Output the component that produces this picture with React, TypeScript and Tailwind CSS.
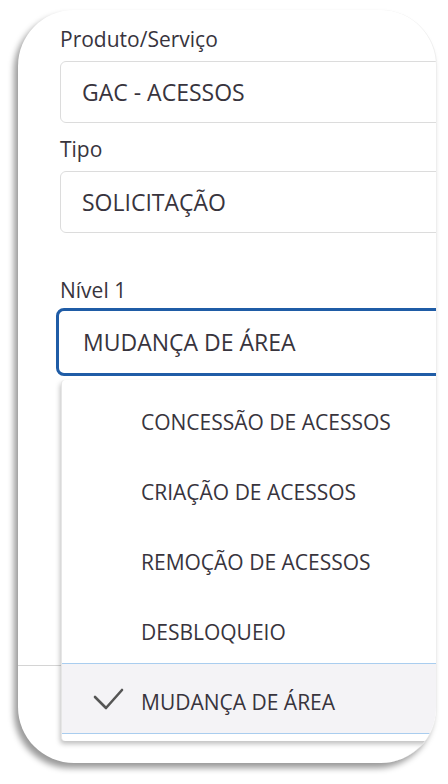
const options = [
  "CONCESSÃO DE ACESSOS",
  "CRIAÇÃO DE ACESSOS",
  "REMOÇÃO DE ACESSOS",
  "DESBLOQUEIO",
  "MUDANÇA DE ÁREA",
];

function Field({ label, value, className = "" }: { label: string; value: string; className?: string }) {
  return (
    <div className={className}>
      <label className="block text-[21px] leading-[28px] text-[#38343d]">{label}</label>
      <div className="mt-[8px] flex h-[62px] w-[420px] items-center rounded-[6px] border border-[#dcdcdc] pl-[21px] text-[23px] text-[#38343d]">
        {value}
      </div>
    </div>
  );
}

export default function App() {
  const selected = "MUDANÇA DE ÁREA";

  return (
    <div className="min-h-[784px] bg-white pt-[10px] pl-[18px] font-['Open_Sans',sans-serif]">
      <div className="relative h-[753px] w-[419px] overflow-hidden rounded-[56px] border-r border-[#eeeeee] bg-white shadow-[-4px_5px_6px_rgba(0,0,0,0.4)]">
        <div className="pl-[42px] pt-[15px]">
          <Field label="Produto/Serviço" value="GAC - ACESSOS" />
          <Field label="Tipo" value="SOLICITAÇÃO" className="mt-[12px]" />

          <div className="mt-[43px]">
            <label className="block text-[21px] leading-[28px] text-[#38343d]">Nível 1</label>
            <div className="-ml-[4px] mt-[4px] flex h-[68px] w-[420px] items-center rounded-[8px] border-[3px] border-[#1f5ca6] pl-[24px] text-[23px] text-[#38343d]">
              MUDANÇA DE ÁREA
            </div>
          </div>
        </div>

        <div className="mt-[289px] h-px w-full bg-[#d4d4d4]" />

        {/* dropdown */}
        <div className="absolute left-[43px] top-[370px] w-[420px] rounded-[4px] border-l border-[#e6e6e6] bg-white pt-[3px] pb-[7px] shadow-[-1px_3px_5px_rgba(0,0,0,0.25)]">
          {options.map((o) => {
            const active = o === selected;
            return (
              <div
                key={o}
                className={
                  active
                    ? "flex h-[71px] items-center border-y border-[#a9cdef] bg-[#f4f3f6] text-[21px] text-[#38343d]"
                    : "flex h-[70px] items-center text-[21px] text-[#38343d]"
                }
              >
                <span className="flex w-[79px] justify-start pl-[30px]">
                  {active && (
                    <svg width="32" height="24" viewBox="0 0 32 24" fill="none">
                      <path d="M3 10 L14 21 L30 3" stroke="#555555" strokeWidth="2.6" strokeLinecap="round" strokeLinejoin="round" />
                    </svg>
                  )}
                </span>
                <span className="pt-[9px]">{o}</span>
              </div>
            );
          })}
        </div>
      </div>
    </div>
  );
}
